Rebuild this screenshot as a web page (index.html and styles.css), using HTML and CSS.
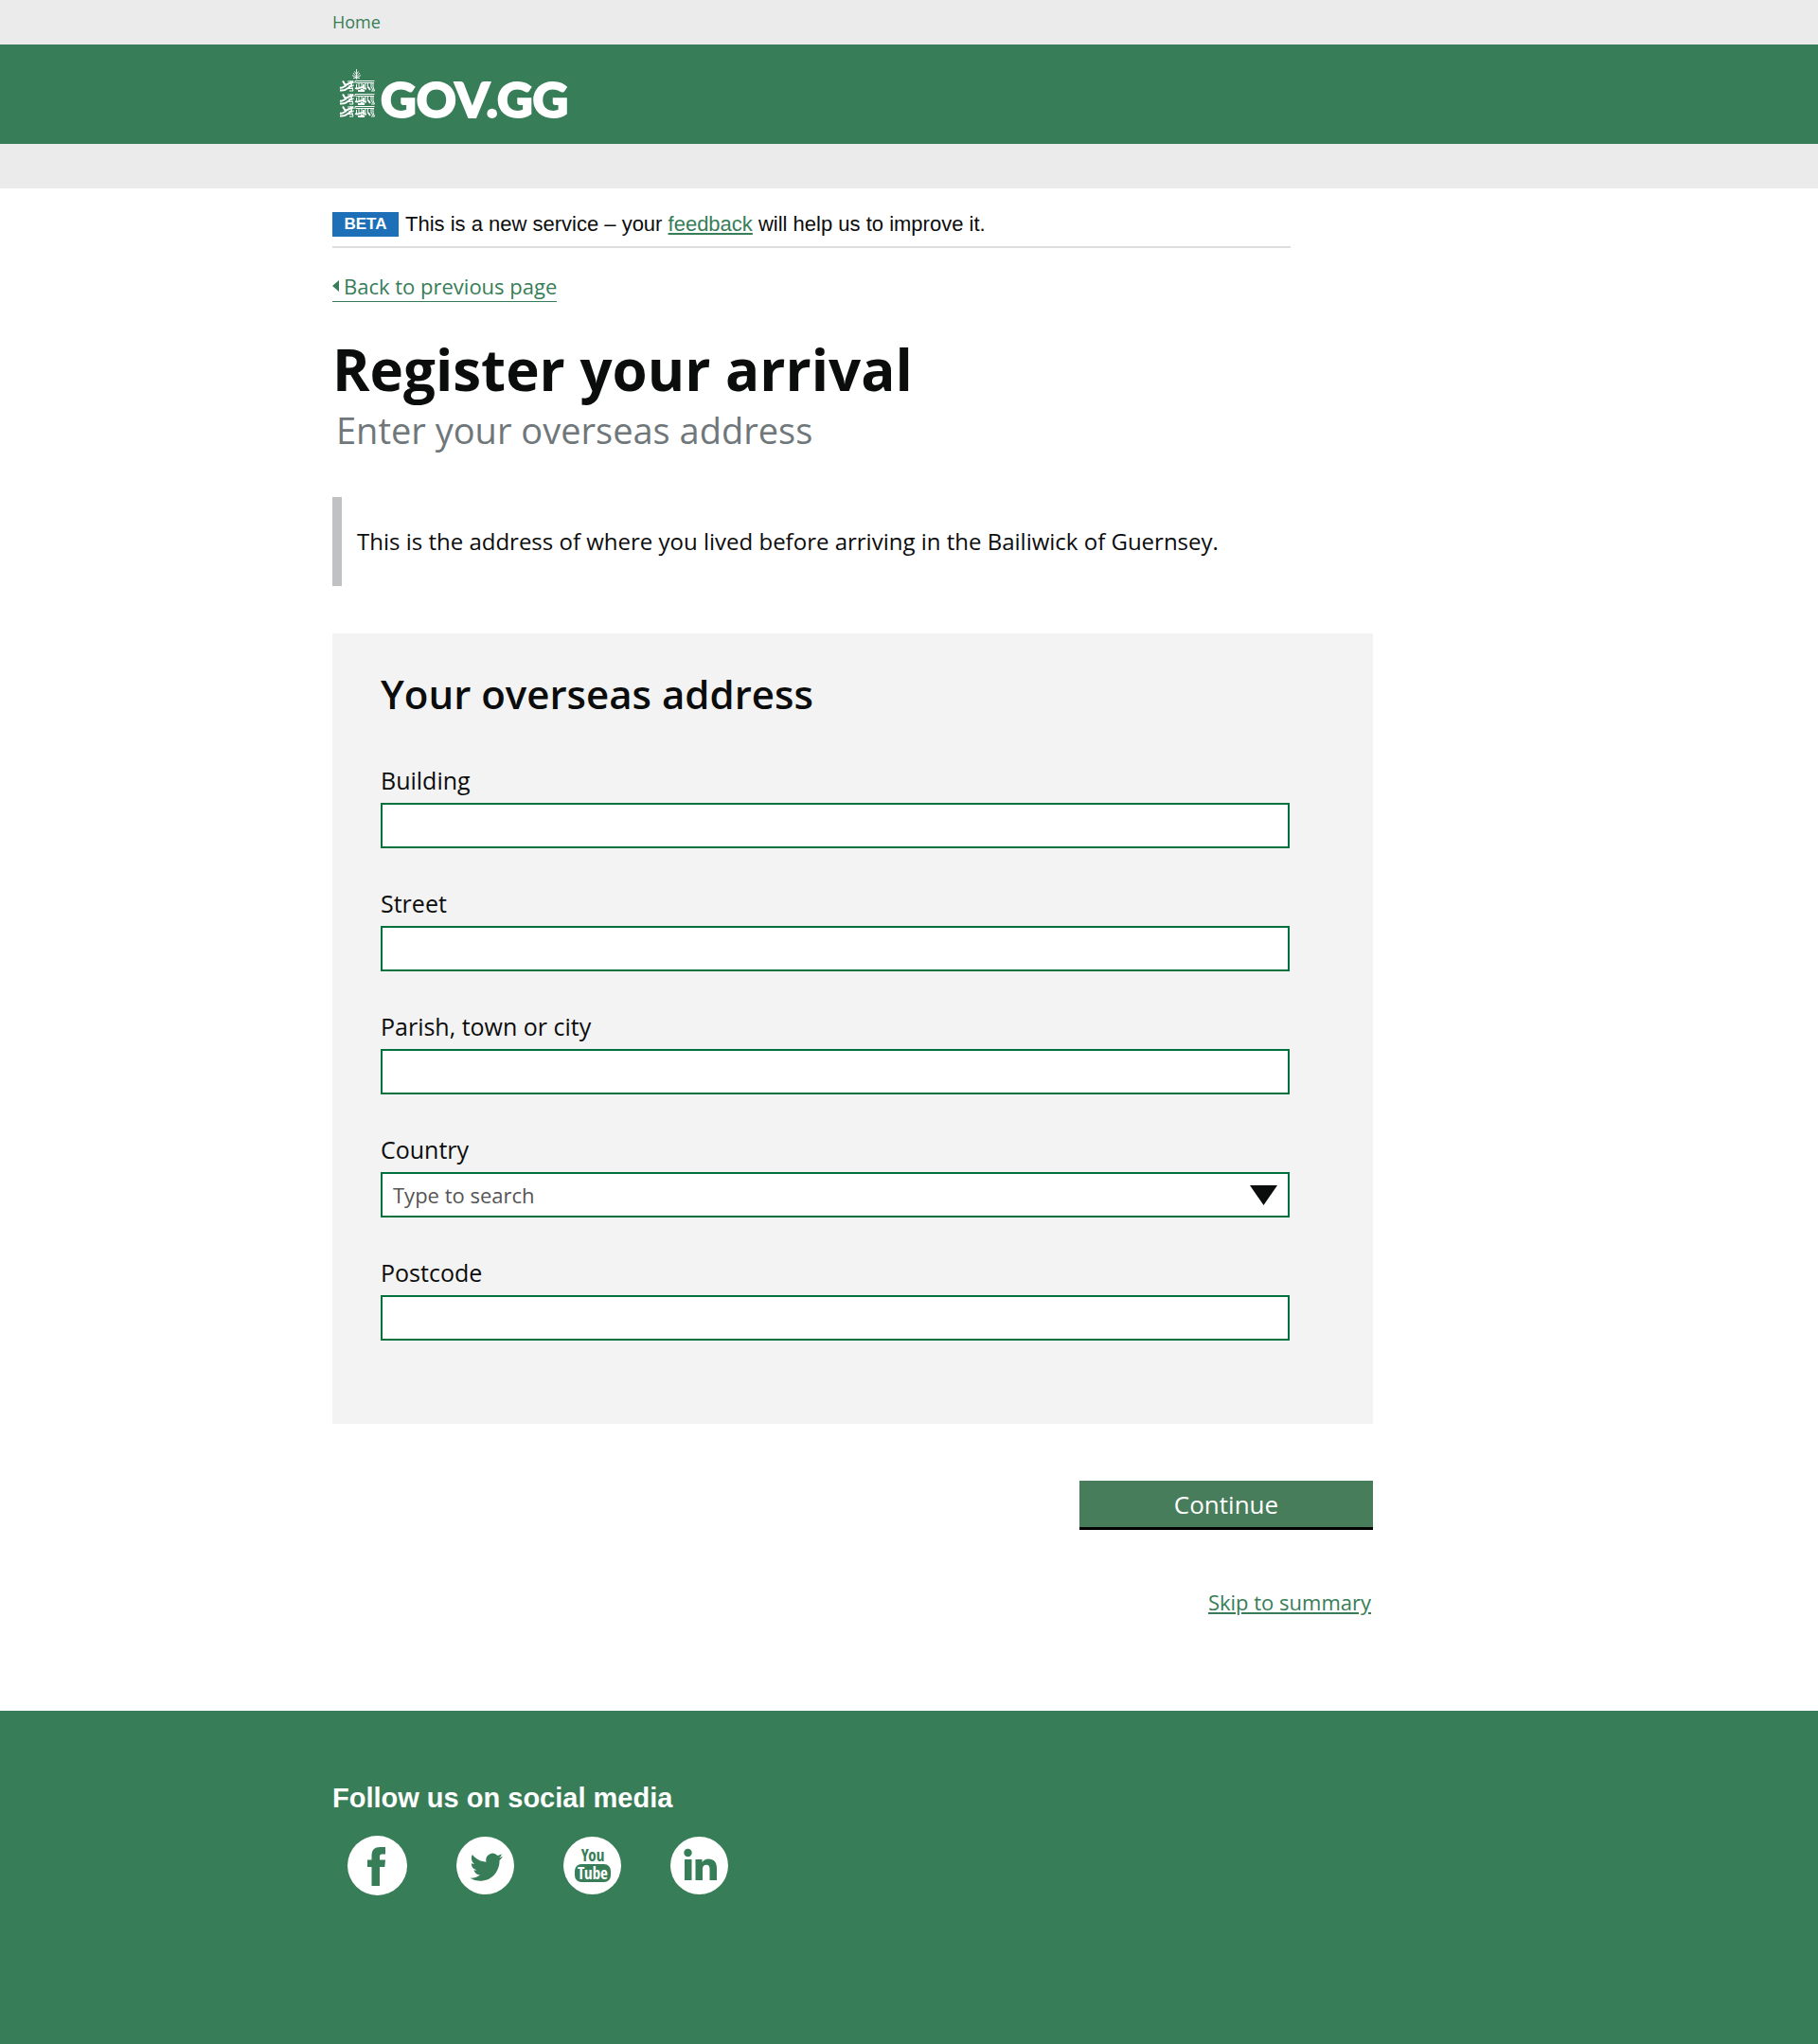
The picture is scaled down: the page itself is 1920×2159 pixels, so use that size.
FILE: index.html
```html
<!DOCTYPE html>
<html lang="en">
<head>
  <meta charset="utf-8">
  <meta name="viewport" content="width=device-width, initial-scale=1">
  <title>Register your arrival – GOV.GG</title>
  <link rel="stylesheet" href="styles.css">
</head>
<body>
  <nav class="topbar" aria-label="Breadcrumb">
    <div class="container"><a class="topbar-link" href="#">Home</a></div>
  </nav>
  <header class="header">
    <div class="container">
      <a class="logo" href="#">
        <svg class="logo-crest" viewBox="0 0 38 52" width="38" height="52" fill="none" stroke="#fff" aria-hidden="true">
          <path stroke-width="1" stroke-opacity=".85" d="M18.500 0v11M16.500 2.500l2 3 2-3M15 4l3.500 4L22 4M14 6.500l4.500 2.500L23 6.500M15 9.500l3.500-.5 3.500.5"/>
          <g id="lion">
            <path stroke-width="2" d="M1 22.500c3 0 5 .5 7-1.500l6-4M1 19.500c3 1 4-1 6-2l-3-5M6.500 17l8-3.500"/>
            <path stroke-width="1" d="M9 13h6M10 15l6-1M10 18l6-1M9 20.500h6M11 23h4M12 12l3 11M15 12l-4 9"/>
            <path stroke-width="1" d="M17 15v-2.500h20.500M18 14.500h19M18.500 16v4M21 15v4M24 15v4M28 15v5M30.500 15v5M34 15v4l2 3M36 15v4l1.500 4H34"/>
            <path stroke-width="1.800" d="M17 20c4 2 6-2 9-1M20 23h7l-4-2M26 16v4l3 1M31 19l2 3"/>
          </g>
          <use href="#lion" y="14"/>
          <use href="#lion" y="27"/>
        </svg>
        <span class="logo-text">GOV.GG</span>
      </a>
    </div>
  </header>
  <div class="strip"></div>

  <main class="container main">
    <div class="phase">
      <strong class="phase-tag">BETA</strong>
      <span class="phase-text">This is a new service – your <a href="#">feedback</a> will help us to improve it.</span>
    </div>

    <a class="back" href="#"><svg width="7" height="12" viewBox="0 0 7 12" aria-hidden="true"><path d="M7 0v12L0 6z" fill="currentColor"/></svg>Back to previous page</a>

    <h1 class="title">Register your arrival</h1>
    <p class="subtitle">Enter your overseas address</p>
    <p class="inset">This is the address of where you lived before arriving in the Bailiwick of Guernsey.</p>

    <form class="form">
      <section class="panel">
        <h2 class="panel-title">Your overseas address</h2>
        <div class="field">
          <label for="building">Building</label>
          <input class="control" id="building" type="text">
        </div>
        <div class="field">
          <label for="street">Street</label>
          <input class="control" id="street" type="text">
        </div>
        <div class="field">
          <label for="town">Parish, town or city</label>
          <input class="control" id="town" type="text">
        </div>
        <div class="field">
          <label for="country">Country</label>
          <div class="select">
            <select class="control" id="country"><option>Type to search</option></select>
            <svg class="select-arrow" width="29" height="21" viewBox="0 0 29 21" aria-hidden="true"><path d="M0 0h29L14.500 21z" fill="#0b0c0c"/></svg>
          </div>
        </div>
        <div class="field">
          <label for="postcode">Postcode</label>
          <input class="control" id="postcode" type="text">
        </div>
      </section>
      <div class="actions">
        <button class="button" type="submit">Continue</button>
        <a class="skip" href="#">Skip to summary</a>
      </div>
    </form>
  </main>

  <footer class="footer">
    <div class="container">
      <h2 class="footer-title">Follow us on social media</h2>
      <div class="social">
        <a href="#" aria-label="Facebook">
          <svg width="63" height="63" viewBox="0 0 63 63" aria-hidden="true"><circle cx="31.500" cy="31.500" r="31.500" fill="#fff"/><path fill="#377d57" d="M25.500 53V33H21v-7.500h4.500V21c0-6 3-9 9-9H40v7.500h-3.500c-2 0-2.500 1-2.500 2.500v3.500h6L39.300 33H34v20z"/></svg>
        </a>
        <a href="#" aria-label="Twitter">
          <svg width="61" height="61" viewBox="0 0 61 61" aria-hidden="true"><circle cx="30.500" cy="30.500" r="30.500" fill="#fff"/><path fill="#377d57" transform="translate(14.500 14.200) scale(1.440 1.500)" d="M23.950 4.570a10 10 0 0 1-2.820.780 4.960 4.960 0 0 0 2.160-2.720c-.950.550-2 .950-3.130 1.180a4.920 4.920 0 0 0-8.380 4.480C7.690 8.090 4.070 6.130 1.640 3.160a4.820 4.820 0 0 0-.670 2.480c0 1.710.870 3.210 2.190 4.100a4.900 4.900 0 0 1-2.230-.620v.060a4.920 4.920 0 0 0 3.950 4.830 5 5 0 0 1-2.210.080 4.940 4.940 0 0 0 4.600 3.420A9.870 9.870 0 0 1 0 19.540a14 14 0 0 0 7.550 2.210c9.050 0 14-7.500 14-13.980 0-.210 0-.420-.020-.630a9.940 9.940 0 0 0 2.460-2.550z"/></svg>
        </a>
        <a href="#" aria-label="YouTube">
          <svg width="61" height="61" viewBox="0 0 61 61" aria-hidden="true"><circle cx="30.500" cy="30.500" r="30.500" fill="#fff"/><rect x="12" y="29" width="38" height="19" rx="7" fill="#377d57"/><text class="yt-text" x="31" y="26" fill="#377d57">You</text><text class="yt-text" x="31" y="45" fill="#fff">Tube</text></svg>
        </a>
        <a href="#" aria-label="LinkedIn">
          <svg width="61" height="61" viewBox="0 0 61 61" aria-hidden="true"><circle cx="30.500" cy="30.500" r="30.500" fill="#fff"/><g fill="#377d57"><circle cx="18.500" cy="17" r="4.200"/><path d="M15 24h7.500v22H15zM26.500 24h7v3c1.500-2.300 4-3.500 6.500-3.500 6 0 9 3.500 9 10V46h-7.500V34c0-2.800-1.200-4.300-3.500-4.300-2.700 0-4 1.700-4 4.500V46h-7.500z"/></g></svg>
        </a>
      </div>
    </div>
  </footer>
</body>
</html>
```

FILE: styles.css
```css
*, *::before, *::after { box-sizing: border-box; }

:root {
  --green: #377d57;
  --link: #377d57;
  --ink: #0b0c0c;
  --grey: #ebebeb;
}

body {
  margin: 0;
  min-height: 100vh;
  display: flex;
  flex-direction: column;
  background: #fff;
  color: var(--ink);
  font-family: "Open Sans", sans-serif;
  font-size: 24px;
  line-height: 32px;
}

h1, h2, p { margin: 0; }
a { color: var(--link); }

.container {
  width: 100%;
  max-width: 1218px;
  margin: 0 auto;
}

.topbar { background: var(--grey); }
.topbar .container { display: flex; }
.topbar-link {
  font-size: 18px;
  line-height: 47px;
  text-decoration: none;
}

.header {
  background: var(--green);
  padding: 26px 0 27px;
}
.logo {
  display: inline-flex;
  gap: 6px;
  padding-left: 7px;
  color: #fff;
  text-decoration: none;
  vertical-align: top;
}
.logo-text {
  font-family: Lato, sans-serif;
  font-weight: 900;
  font-size: 52px;
  line-height: 62px;
  height: 52px;
  -webkit-text-stroke: 2px #fff;
}
.strip { height: 47px; background: var(--grey); }

.main { flex: 1; padding: 25px 0 99px; }

.phase {
  display: flex;
  gap: 7px;
  max-width: 1012px;
  padding-bottom: 10px;
  border-bottom: 2px solid #dedede;
  font-family: "Liberation Sans", Arial, sans-serif;
}
.phase-tag {
  width: 70px;
  background: #1d70b8;
  color: #fff;
  font-size: 17px;
  line-height: 26px;
  text-align: center;
}
.phase-text { font-size: 22px; line-height: 26px; }

.back {
  display: inline-flex;
  align-items: center;
  gap: 5px;
  margin-top: 24px;
  border-bottom: 1px solid var(--link);
  font-size: 22px;
  line-height: 32px;
  text-decoration: none;
  vertical-align: top;
}

.title {
  margin-top: 30px;
  font-size: 60px;
  line-height: 82px;
}
.subtitle {
  padding-left: 4px;
  color: #6f777b;
  font-size: 38px;
  line-height: 46px;
}
.inset {
  margin-top: 48px;
  padding: 31px 16px;
  border-left: 10px solid #bfc1c3;
}

.form { max-width: 1099px; margin-top: 50px; }
.panel {
  display: grid;
  gap: 42px;
  padding: 35px 88px 88px 51px;
  background: #f3f3f3;
}
.panel-title {
  margin-bottom: 4px;
  font-size: 42px;
  line-height: 58px;
  font-weight: 600;
}
.field { display: grid; gap: 8px; font-size: 25px; }
.control {
  width: 100%;
  height: 48px;
  padding: 0 11px;
  border: 2px solid #00703c;
  border-radius: 0;
  background: #fff;
  color: #555;
  font: 22px "Open Sans", sans-serif;
}
.select { display: grid; align-items: center; }
.select .control { appearance: none; grid-area: 1 / 1; }
.select-arrow {
  grid-area: 1 / 1;
  justify-self: end;
  margin-right: 13px;
  pointer-events: none;
}

.actions {
  display: flex;
  flex-direction: column;
  align-items: flex-end;
  gap: 60px;
  margin-top: 60px;
}
.button {
  width: 310px;
  height: 52px;
  padding: 0;
  border: 0;
  border-bottom: 3px solid #000;
  background: #477d5a;
  color: #fff;
  font: 26px "Open Sans", sans-serif;
}
.skip { margin-right: 2px; font-size: 22px; }

.footer { background: var(--green); padding: 76px 0 157px; }
.footer-title {
  color: #fff;
  font: bold 29px/32px "Liberation Sans", Arial, sans-serif;
}
.social {
  display: flex;
  align-items: center;
  gap: 52px;
  padding: 24px 0 0 16px;
}
.social a { display: flex; }
.yt-text {
  font: bold 17px "Liberation Sans Narrow", "Open Sans Condensed", "DejaVu Sans Condensed", sans-serif;
  text-anchor: middle;
}
```
